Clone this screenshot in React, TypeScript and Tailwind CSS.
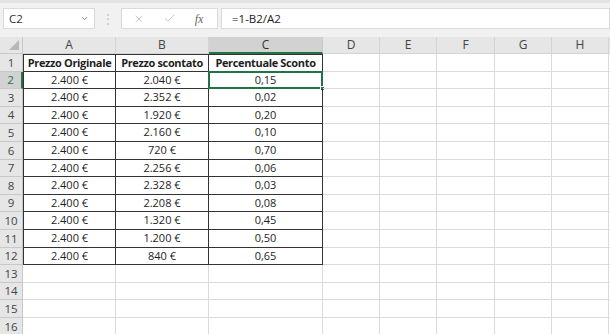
import { X, Check, ChevronDown } from "lucide-react";

const cols = [
    { key: "A", w: "w-[93px]" },
    { key: "B", w: "w-[93px]" },
    { key: "C", w: "w-[114px]" },
    { key: "D", w: "w-[57px]" },
    { key: "E", w: "w-[57px]" },
    { key: "F", w: "w-[58px]" },
    { key: "G", w: "w-[57px]" },
    { key: "H", w: "w-[57px]" },
];

const data = [
    ["2.400 €", "2.040 €", "0,15"],
    ["2.400 €", "2.352 €", "0,02"],
    ["2.400 €", "1.920 €", "0,20"],
    ["2.400 €", "2.160 €", "0,10"],
    ["2.400 €", "720 €", "0,70"],
    ["2.400 €", "2.256 €", "0,06"],
    ["2.400 €", "2.328 €", "0,03"],
    ["2.400 €", "2.208 €", "0,08"],
    ["2.400 €", "1.320 €", "0,45"],
    ["2.400 €", "1.200 €", "0,50"],
    ["2.400 €", "840 €", "0,65"],
];

const rows: string[][] = [["Prezzo Originale", "Prezzo scontato", "Percentuale Sconto"], ...data];

export default function App() {
    return (
        <div className="h-[334px] w-[610px] overflow-hidden bg-white font-['Open_Sans',sans-serif] text-[11px] text-[#1e1e1e]">
            {/* formula bar */}
            <div className="flex h-[37px] items-start border-t-[3px] border-[#e4e4e4] bg-[#f1f1f1] pt-[5px] pl-[3px]">
                <div className="flex h-[21px] w-[92px] items-center justify-between border border-[#dadada] bg-white pl-[5px] pr-[5px] text-[11.5px] text-[#333]">
                    <span>C2</span>
                    <ChevronDown size={9} strokeWidth={2.5} className="text-[#888]" />
                </div>
                <div className="flex h-[21px] w-[26px] items-center justify-center text-[12px] leading-none text-[#c0c0c0]">⋮</div>
                <div className="flex h-[21px] w-[97px] items-center border border-[#dadada] bg-white">
                    <div className="flex w-[32px] justify-center pl-[2px]"><X size={12} strokeWidth={1.3} className="text-[#b0b0b0]" /></div>
                    <div className="flex w-[30px] justify-center"><Check size={13} strokeWidth={1.3} className="text-[#b0b0b0]" /></div>
                    <div className="flex w-[30px] justify-center font-['Liberation_Serif',serif] text-[12px] italic text-[#666]">fx</div>
                </div>
                <div className="ml-[3px] flex h-[21px] flex-1 items-center border border-[#dadada] bg-white pl-[10px] text-[11.5px] text-[#222]">=1-B2/A2</div>
            </div>

            {/* column headers */}
            <div className="flex h-[17px]">
                <div className="relative w-[23px] border-r border-b border-[#c8c8c8] bg-[#e6e6e6]">
                    <div className="absolute right-[3px] bottom-[3px] h-0 w-0 border-l-[10px] border-t-[10px] border-l-transparent border-t-transparent border-r-0 border-b-[10px] border-b-[#b8b8b8]" />
                </div>
                {cols.map((c) => (
                    <div
                        key={c.key}
                        className={`${c.w} flex items-center justify-center text-[12px] ${c.key === "C" ? "border-r border-b-2 border-r-[#c8c8c8] border-b-[#217346] bg-[#d2d2d2] text-[#333]" : "border-r border-b border-[#d4d4d4] bg-[#e6e6e6] text-[#444]"}`}
                    >
                        {c.key}
                    </div>
                ))}
                <div className="flex-1 border-b border-[#d4d4d4] bg-[#e6e6e6]" />
            </div>

            {/* rows */}
            {Array.from({ length: 16 }).map((_, r) => {
                const rowNum = r + 1;
                const vals = rows[r];
                return (
                    <div key={rowNum} className="flex h-[17.6px]">
                        <div
                            className={`flex w-[23px] items-center justify-center text-[11.5px] ${rowNum === 2 ? "border-r-2 border-b border-r-[#217346] border-b-[#c8c8c8] bg-[#d2d2d2] text-[#217346]" : "border-r border-b border-[#c8c8c8] bg-[#e6e6e6] text-[#444]"}`}
                        >
                            {rowNum}
                        </div>
                        {cols.map((c, ci) => {
                            const inTable = vals && ci < 3;
                            const border = inTable
                                ? `border-r border-b border-[#333] ${ci === 0 ? "border-l" : ""} ${rowNum === 1 ? "border-t" : ""}`
                                : "border-r border-b border-[#dadada]";
                            return (
                                <div
                                    key={c.key}
                                    className={`${c.w} relative flex items-center justify-center whitespace-nowrap ${border} ${rowNum === 1 ? "font-bold tracking-[-0.35px]" : ""}`}
                                >
                                    {inTable ? vals[ci] : ""}
                                    {rowNum === 2 && c.key === "C" && (
                                        <>
                                            <div className="absolute -top-[1px] -left-[1px] -right-[1px] -bottom-[1px] border-2 border-[#217346]" />
                                            <div className="absolute -right-[3px] -bottom-[3px] h-[5px] w-[5px] border border-white bg-[#217346]" />
                                        </>
                                    )}
                                </div>
                            );
                        })}
                        <div className="flex-1 border-b border-[#dadada]" />
                    </div>
                );
            })}
        </div>
    );
}
